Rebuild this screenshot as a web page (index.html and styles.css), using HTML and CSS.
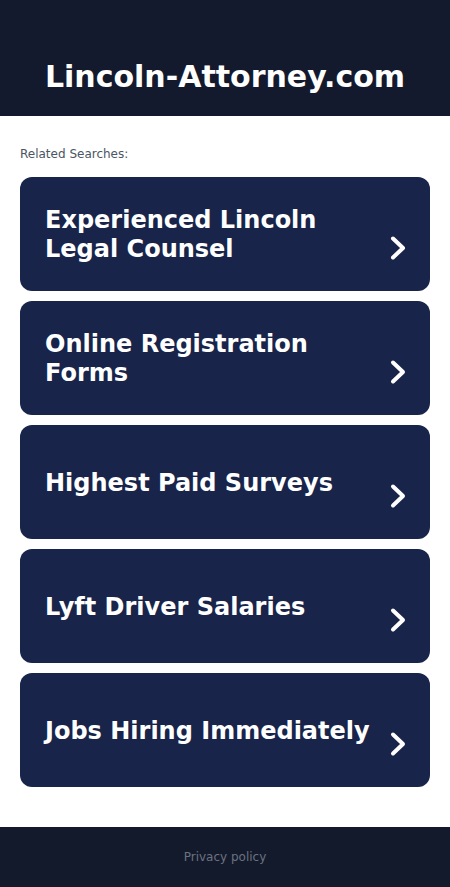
FILE: index.html
```html
<!DOCTYPE html>
<html lang="en">
<head>
    <meta charset="UTF-8">
    <meta name="viewport" content="width=device-width, initial-scale=1.0">
    <title>Lincoln-Attorney.com</title>
    <link rel="stylesheet" href="styles.css">
</head>
<body>
    <header class="site-header">
        <h1>Lincoln-Attorney.com</h1>
    </header>

    <main class="content">
        <p class="related-label">Related Searches:</p>
        <div class="search-list">
            <a class="search-card" href="#">
                <span class="search-text">Experienced Lincoln Legal Counsel</span>
                <svg class="chevron" viewBox="0 0 20 26"><path d="M5 3.5 L15 13 L5 22.5"/></svg>
            </a>
            <a class="search-card" href="#">
                <span class="search-text">Online Registration Forms</span>
                <svg class="chevron" viewBox="0 0 20 26"><path d="M5 3.5 L15 13 L5 22.5"/></svg>
            </a>
            <a class="search-card" href="#">
                <span class="search-text">Highest Paid Surveys</span>
                <svg class="chevron" viewBox="0 0 20 26"><path d="M5 3.5 L15 13 L5 22.5"/></svg>
            </a>
            <a class="search-card" href="#">
                <span class="search-text">Lyft Driver Salaries</span>
                <svg class="chevron" viewBox="0 0 20 26"><path d="M5 3.5 L15 13 L5 22.5"/></svg>
            </a>
            <a class="search-card" href="#">
                <span class="search-text">Jobs Hiring Immediately</span>
                <svg class="chevron" viewBox="0 0 20 26"><path d="M5 3.5 L15 13 L5 22.5"/></svg>
            </a>
        </div>
    </main>

    <footer class="site-footer">
        <a href="#">Privacy policy</a>
    </footer>
</body>
</html>
```

FILE: styles.css
```css
body {
    font-family: 'DejaVu Sans', sans-serif;
    background-color: #ffffff;
    margin: 0;
}
.site-header {
    background-color: #141a2e;
    height: 116px;
    display: flex;
    align-items: flex-end;
    justify-content: center;
}
.site-header h1 {
    color: #ffffff;
    font-size: 30px;
    font-weight: bold;
    margin: 0 0 21px;
    line-height: 36px;
}
.content {
    padding: 29px 20px 40px;
}
.related-label {
    font-size: 12px;
    color: #4b5563;
    margin: 1px 0 15px;
    line-height: 16px;
}
.search-list {
    display: flex;
    flex-direction: column;
    gap: 10px;
}
.search-card {
    display: flex;
    align-items: center;
    height: 114px;
    box-sizing: border-box;
    padding: 0 22px 0 25px;
    background-color: #18244a;
    border-radius: 12px;
    text-decoration: none;
}
.search-text {
    flex: 1;
    color: #ffffff;
    font-size: 24px;
    font-weight: bold;
    line-height: 29px;
    margin-top: 2px;
    padding-right: 10px;
}
.chevron {
    width: 20px;
    height: 26px;
    margin-top: 28px;
    fill: none;
    stroke: #ffffff;
    stroke-width: 4;
    stroke-linecap: round;
    stroke-linejoin: round;
    flex-shrink: 0;
}
.site-footer {
    background-color: #131a2c;
    height: 60px;
    display: flex;
    align-items: center;
    justify-content: center;
}
.site-footer a {
    color: #6b7280;
    font-size: 12px;
    text-decoration: none;
}
```
